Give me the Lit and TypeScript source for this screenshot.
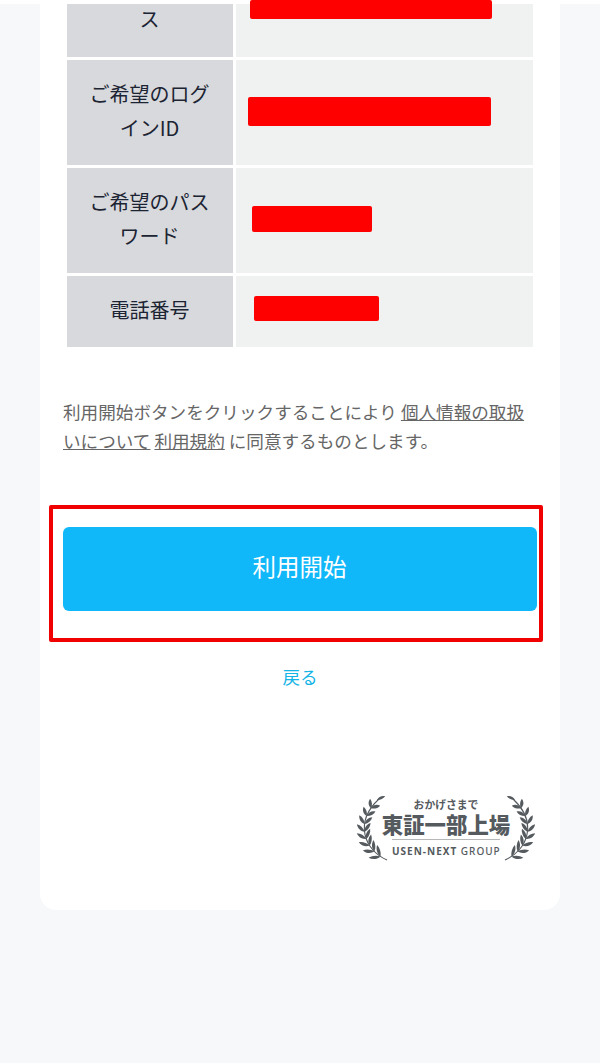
import { LitElement, html, css, svg } from "lit";
import { customElement } from "lit/decorators.js";

type Pt = [number, number];
const bez = (p: Pt[], t: number): Pt => {
  const u = 1 - t;
  const f = (i: number) =>
    u * u * u * p[0][i] + 3 * u * u * t * p[1][i] + 3 * u * t * t * p[2][i] + t * t * t * p[3][i];
  return [f(0), f(1)];
};
const stem: Pt[] = [[32, 68], [9, 58], [-1, 30], [24, 7]];
const leaf = (x: number, y: number, a: number, l: number, w: number) =>
  svg`<path transform="translate(${x.toFixed(1)} ${y.toFixed(1)}) rotate(${a.toFixed(1)})" d="M0 0C${l * 0.3} ${-w} ${l * 0.7} ${-w} ${l} 0C${l * 0.7} ${w * 0.7} ${l * 0.3} ${w * 0.7} 0 0Z" fill="#555a5e"/>`;

const leafPaths = () => {
  const out: unknown[] = [];
  const pairs = 8;
  for (let i = 0; i < pairs; i++) {
    const t = 0.1 + (i / pairs) * 0.88;
    const [x, y] = bez(stem, t);
    const [x2, y2] = bez(stem, t + 0.01);
    const ang = (Math.atan2(y2 - y, x2 - x) * 180) / Math.PI;
    const l = 12 - i * 0.35;
    out.push(leaf(x, y, ang - 40, l, 2.6));
    out.push(leaf(x, y, ang + 40, l, 2.6));
  }
  const [tx, ty] = bez(stem, 1);
  out.push(leaf(tx - 2, ty + 1, -25, 9, 2.2));
  return out;
};

const laurel = (flip: boolean) => html`<svg class="laurel ${flip ? "flip" : ""}" viewBox="0 0 33 70" width="33" height="70" aria-hidden="true">
  <path d="M32 68C9 58 -1 30 24 7" fill="none" stroke="#555a5e" stroke-width="1.1"/>
  ${leafPaths()}
</svg>`;

@customElement("app-root")
export class AppRoot extends LitElement {
  static styles = css`
    :host {
      display: block;
      min-height: 1063px;
      background: #f7f8fa;
      font-family: "Noto Sans CJK JP", "Noto Sans", sans-serif;
      color: #1c2433;
    }
    .strip { height: 4px; background: #fff; }
    .card {
      margin: 0 40px;
      padding: 0 23px 48px;
      height: 906px;
      box-sizing: border-box;
      background: #fff;
      border-radius: 0 0 16px 16px;
    }
    .table {
      display: grid;
      grid-template-columns: 166px 297.5px;
      grid-template-rows: 53px 104.5px 104.5px 71px;
      column-gap: 3.3px;
      row-gap: 3.4px;
      margin: 0 3.5px;
    }
    .th {
      background: #d7d9dc;
      font-size: 20px;
      line-height: 34px;
      text-align: center;
      padding: 0 16px 4px;
      display: flex;
      align-items: center;
      justify-content: center;
    }
    .th.clip { align-items: flex-start; line-height: 30px; padding-bottom: 0; }
    .td { background: #f0f1f1; position: relative; }
    .mask { position: absolute; background: #ff0000; border-radius: 2px; }
    .note {
      margin: 50px 0 0;
      font-size: 17.6px;
      line-height: 29px;
      color: #666;
    }
    .note a { color: #666; text-decoration: underline; }
    .mark {
      margin: 50px -6px 0 -14px;
      padding: 17.5px 2.5px 27px 9.5px;
      border: 4.5px solid #f00000;
      border-radius: 2px;
    }
    .start {
      display: flex;
      align-items: center;
      justify-content: center;
      height: 84px;
      box-sizing: border-box;
      padding-bottom: 5px;
      background: #11b8f9;
      border-radius: 6px;
      color: #fff;
      font-size: 23.5px;
    }
    .back {
      display: block;
      margin-top: 22px;
      text-align: center;
      font-size: 17.6px;
      line-height: 26px;
      color: #14b4e6;
    }
    .logo {
      display: grid;
      width: 182px;
      height: 70px;
      margin: 102px 0 0 auto;
      color: #555a5e;
    }
    .logo > * { grid-area: 1 / 1; }
    .laurel { justify-self: start; }
    .laurel.flip { justify-self: end; transform: scaleX(-1); }
    .words {
      justify-self: center;
      display: flex;
      flex-direction: column;
      align-items: center;
      width: 130px;
    }
    .thanks { font-size: 10.8px; line-height: 12px; margin-top: 6px; font-weight: 700; }
    .listed {
      font-size: 21.4px;
      line-height: 27px;
      font-weight: 900;
      white-space: nowrap;
    }
    .group {
      width: 108px;
      border-top: 1px solid #b5b7b9;
      margin-top: 2px;
      font-family: "Noto Sans", sans-serif;
      font-size: 10px;
      line-height: 22px;
      font-weight: 500;
      letter-spacing: 1px;
      text-align: center;
      white-space: nowrap;
    }
    .group b { font-weight: 700; }
  `;

  render() {
    return html`
      <div class="strip"></div>
      <main class="card">
        <div class="table">
          <div class="th clip">ス</div>
          <div class="td"><span class="mask" style="left:14px;top:-4px;width:242px;height:19px"></span></div>
          <div class="th">ご希望のログインID</div>
          <div class="td"><span class="mask" style="left:12px;top:37px;width:243px;height:29px"></span></div>
          <div class="th">ご希望のパスワード</div>
          <div class="td"><span class="mask" style="left:16px;top:38px;width:120px;height:26px"></span></div>
          <div class="th">電話番号</div>
          <div class="td"><span class="mask" style="left:18px;top:20px;width:125px;height:25px"></span></div>
        </div>
        <p class="note">利用開始ボタンをクリックすることにより <a>個人情報の取扱いについて</a> <a>利用規約</a> に同意するものとします。</p>
        <div class="mark"><div class="start">利用開始</div></div>
        <a class="back">戻る</a>
        <div class="logo">
          ${laurel(false)}
          <div class="words">
            <div class="thanks">おかげさまで</div>
            <div class="listed">東証一部上場</div>
            <div class="group"><b>USEN-NEXT</b> GROUP</div>
          </div>
          ${laurel(true)}
        </div>
      </main>
    `;
  }
}
